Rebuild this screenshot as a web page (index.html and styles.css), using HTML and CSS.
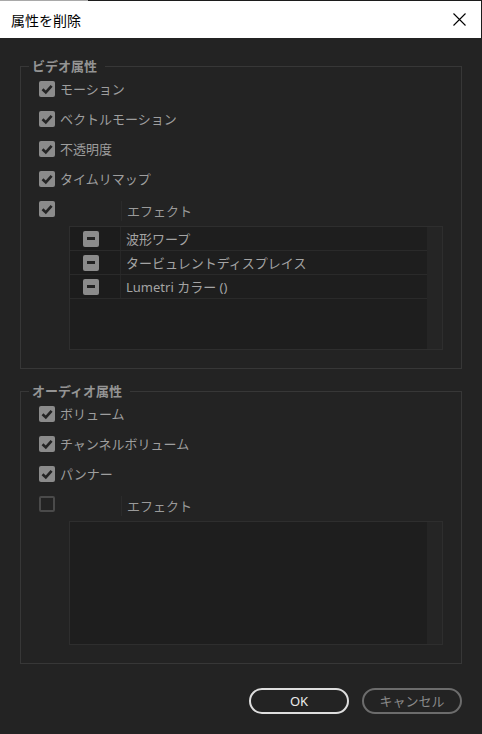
FILE: index.html
```html
<!DOCTYPE html>
<html lang="ja">
<head>
<meta charset="utf-8">
<title>属性を削除</title>
<link rel="stylesheet" href="styles.css">
</head>
<body>
<div class="dialog">
  <header class="titlebar">
    <span class="title">属性を削除</span>
    <svg class="close" width="13" height="13" viewBox="0 0 13 13"><path d="M0.5 0.5L12.5 12.5M12.5 0.5L0.5 12.5" stroke="#000" stroke-width="1.1" fill="none"/></svg>
  </header>
  <main class="content">
    <fieldset class="group">
      <legend>ビデオ属性</legend>
      <div class="group-body">
        <div class="row"><span class="cb checked"><svg viewBox="0 0 16 16"><path d="M3.5 8.2L6.8 11.4L12.6 4.8"/></svg></span><span class="label">モーション</span></div>
        <div class="row"><span class="cb checked"><svg viewBox="0 0 16 16"><path d="M3.5 8.2L6.8 11.4L12.6 4.8"/></svg></span><span class="label">ベクトルモーション</span></div>
        <div class="row"><span class="cb checked"><svg viewBox="0 0 16 16"><path d="M3.5 8.2L6.8 11.4L12.6 4.8"/></svg></span><span class="label">不透明度</span></div>
        <div class="row"><span class="cb checked"><svg viewBox="0 0 16 16"><path d="M3.5 8.2L6.8 11.4L12.6 4.8"/></svg></span><span class="label">タイムリマップ</span></div>
        <div class="row fx-row"><span class="cb checked"><svg viewBox="0 0 16 16"><path d="M3.5 8.2L6.8 11.4L12.6 4.8"/></svg></span>
          <div class="fx-head"><span class="fx-head-icon"></span><span class="fx-head-name">エフェクト</span></div>
        </div>
        <div class="fx-list">
          <div class="fx-rows">
            <div class="fx-item"><span class="fx-icon-cell"><span class="minus"></span></span><span class="fx-name">波形ワープ</span></div>
            <div class="fx-item"><span class="fx-icon-cell"><span class="minus"></span></span><span class="fx-name">タービュレントディスプレイス</span></div>
            <div class="fx-item"><span class="fx-icon-cell"><span class="minus"></span></span><span class="fx-name">Lumetri カラー ()</span></div>
          </div>
          <div class="fx-scroll"></div>
        </div>
      </div>
    </fieldset>
    <fieldset class="group audio">
      <legend>オーディオ属性</legend>
      <div class="group-body">
        <div class="row"><span class="cb checked"><svg viewBox="0 0 16 16"><path d="M3.5 8.2L6.8 11.4L12.6 4.8"/></svg></span><span class="label">ボリューム</span></div>
        <div class="row"><span class="cb checked"><svg viewBox="0 0 16 16"><path d="M3.5 8.2L6.8 11.4L12.6 4.8"/></svg></span><span class="label">チャンネルボリューム</span></div>
        <div class="row"><span class="cb checked"><svg viewBox="0 0 16 16"><path d="M3.5 8.2L6.8 11.4L12.6 4.8"/></svg></span><span class="label">パンナー</span></div>
        <div class="row fx-row"><span class="cb"></span>
          <div class="fx-head"><span class="fx-head-icon"></span><span class="fx-head-name">エフェクト</span></div>
        </div>
        <div class="fx-list">
          <div class="fx-rows"></div>
          <div class="fx-scroll"></div>
        </div>
      </div>
    </fieldset>
  </main>
  <footer class="buttons">
    <button class="btn primary">OK</button>
    <button class="btn secondary">キャンセル</button>
  </footer>
</div>
</body>
</html>
```

FILE: styles.css
```css
html, body {
  margin: 0;
  padding: 0;
}
body {
  width: 482px;
  height: 734px;
  overflow: hidden;
  background: #232323;
  font-family: "Noto Sans", "Noto Sans CJK JP", sans-serif;
}
.dialog {
  width: 482px;
  height: 734px;
  display: flex;
  flex-direction: column;
}
.titlebar {
  height: 38px;
  box-sizing: border-box;
  background: #ffffff;
  display: flex;
  align-items: center;
  justify-content: space-between;
  padding: 0 15px 0 11px;
  border-style: solid;
  border-width: 1px 1px 0 0;
  border-image: linear-gradient(to right, #a9a9a9 89px, #1c1c1c 89px) 1;
}
.title {
  font-family: "Noto Sans CJK JP", sans-serif;
  font-size: 14px;
  line-height: 18px;
  color: #000;
}
.close {
  display: block;
}
.content {
  padding: 20px 20px 0 20px;
  display: flex;
  flex-direction: column;
}
.group {
  margin: 0;
  padding: 0;
  border: 1px solid #373737;
  min-width: 0;
}
.group.audio {
  margin-top: 14px;
}
.group legend {
  margin-left: 8px;
  padding: 0 8px 0 3px;
  font-family: "Noto Sans CJK JP", sans-serif;
  font-weight: bold;
  font-size: 13px;
  line-height: 16px;
  color: #949494;
}
.group-body {
  padding: 0 18px 18px 18px;
}
.row {
  display: flex;
  align-items: center;
  height: 30px;
  gap: 5px;
}
.label {
  font-family: "Noto Sans CJK JP", sans-serif;
  font-size: 13px;
  line-height: 16px;
  color: #9e9e9e;
  margin-top: -1px;
}
.cb {
  flex: none;
  width: 16px;
  height: 16px;
  box-sizing: border-box;
  border-radius: 2px;
  border: 2px solid #4a4a4a;
  display: block;
}
.cb.checked {
  border: none;
  background: #8b8b8b;
}
.cb svg {
  display: block;
  width: 16px;
  height: 16px;
}
.cb svg path {
  fill: none;
  stroke: #242424;
  stroke-width: 2.6;
}
.fx-row {
  gap: 14px;
}
.fx-head {
  display: flex;
  align-items: center;
  height: 20px;
  margin-top: 4px;
}
.fx-head-icon {
  width: 52px;
  height: 20px;
  border-right: 1px solid #2b2b2b;
}
.fx-head-name {
  padding-left: 5px;
  font-family: "Noto Sans CJK JP", sans-serif;
  font-size: 13px;
  line-height: 16px;
  color: #9a9a9a;
}
.fx-list {
  margin-top: 2px;
  margin-left: 30px;
  height: 124px;
  box-sizing: border-box;
  border: 1px solid #2e2e2e;
  background: #1e1e1e;
  display: flex;
}
.fx-rows {
  flex: 1;
  display: flex;
  flex-direction: column;
}
.fx-scroll {
  width: 15px;
  background: #252525;
}
.fx-item {
  height: 24px;
  box-sizing: border-box;
  border-bottom: 1px solid #2a2a2a;
  display: flex;
  align-items: center;
}
.fx-icon-cell {
  width: 51px;
  height: 100%;
  box-sizing: border-box;
  padding-left: 13px;
  border-right: 1px solid #272727;
  display: flex;
  align-items: center;
  background: #1c1c1c;
}
.minus {
  width: 16px;
  height: 16px;
  border-radius: 2px;
  background: #8b8b8b;
  display: flex;
  align-items: center;
  justify-content: center;
}
.minus::before {
  content: "";
  width: 8px;
  height: 3px;
  background: #222;
}
.fx-name {
  padding-left: 5px;
  font-size: 13px;
  line-height: 16px;
  color: #a4a4a4;
}
.buttons {
  display: flex;
  justify-content: flex-end;
  gap: 13px;
  padding: 24px 20px 0 20px;
}
.btn {
  width: 100px;
  height: 26px;
  box-sizing: border-box;
  border-radius: 13px;
  background: transparent;
  font-family: "Noto Sans", "Noto Sans CJK JP", sans-serif;
  font-size: 13px;
  line-height: 16px;
  padding: 0;
  margin: 0;
}
.btn.primary {
  border: 2px solid #dedede;
  color: #ececec;
}
.btn.secondary {
  border: 2px solid #6c6c6c;
  color: #8a8a8a;
}
```
